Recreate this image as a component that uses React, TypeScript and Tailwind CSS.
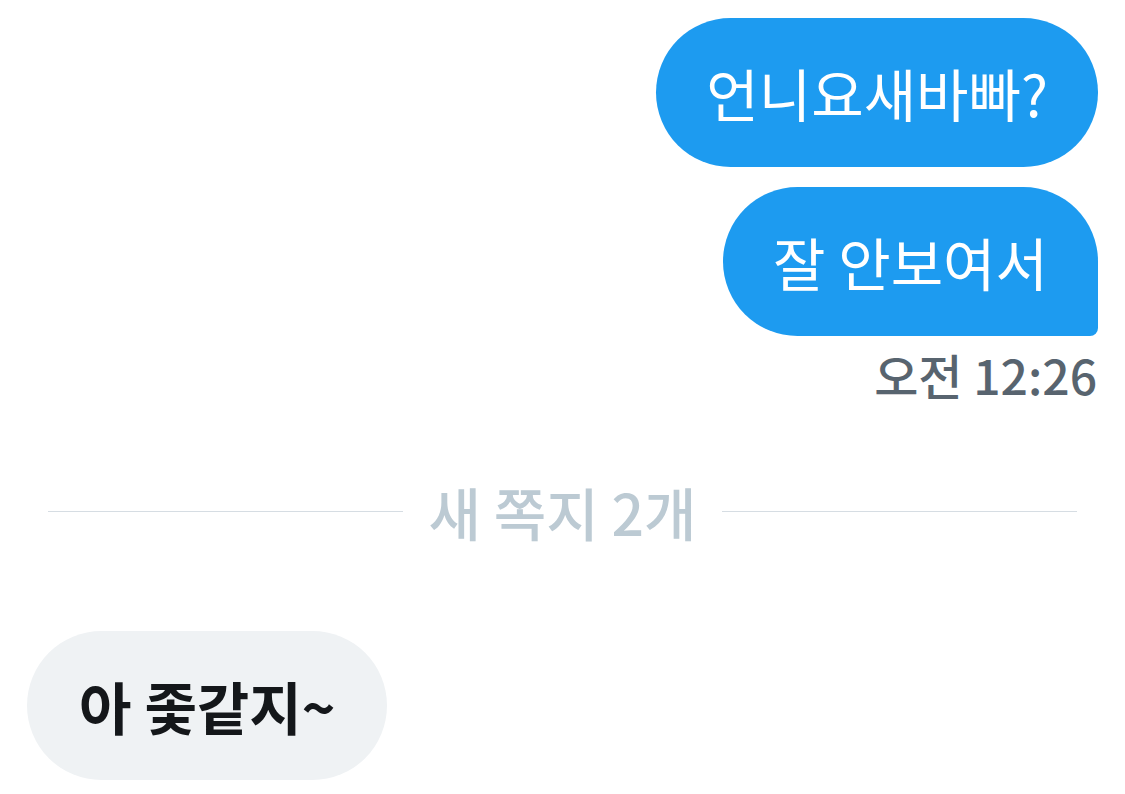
import React from 'react';

const font = '"Noto Sans CJK KR", "Noto Sans", sans-serif';

function OutBubble({ text, last }: { text: string; last?: boolean }) {
  return (
    <div
      className={`flex h-[149px] items-center bg-[#1d9bf0] px-[50px] text-[57px] font-normal text-white ${
        last ? 'rounded-[75px] rounded-br-[8px]' : 'rounded-[75px]'
      }`}
    >
      {text}
    </div>
  );
}

export default function App() {
  return (
    <div className="h-[794px] w-[1125px] overflow-hidden bg-white" style={{ fontFamily: font }}>
      {/* outgoing */}
      <div className="flex flex-col items-end gap-[20px] px-[27px] pt-[18px]">
        <OutBubble text="언니요새바빠?" />
        <OutBubble text="잘 안보여서" last />
      </div>
      <div className="flex justify-end px-[28px] pt-[8px] text-[48px] font-medium leading-[60px] text-[#58646f]">
        오전 12:26
      </div>

      {/* divider */}
      <div className="mt-[72px] flex items-center gap-[26px] px-[48px]">
        <div className="h-px flex-1 bg-[#d6dde3]" />
        <span className="text-[57px] font-medium leading-[70px] text-[#bccad3]">새 쪽지 2개</span>
        <div className="h-px flex-1 bg-[#d6dde3]" />
      </div>

      {/* incoming */}
      <div className="flex px-[27px] pt-[85px]">
        <div className="flex h-[149px] items-center rounded-[75px] bg-[#eff2f4] px-[52px] text-[57px] font-bold text-[#14171a]">
          아 좇같지~
        </div>
      </div>
    </div>
  );
}
